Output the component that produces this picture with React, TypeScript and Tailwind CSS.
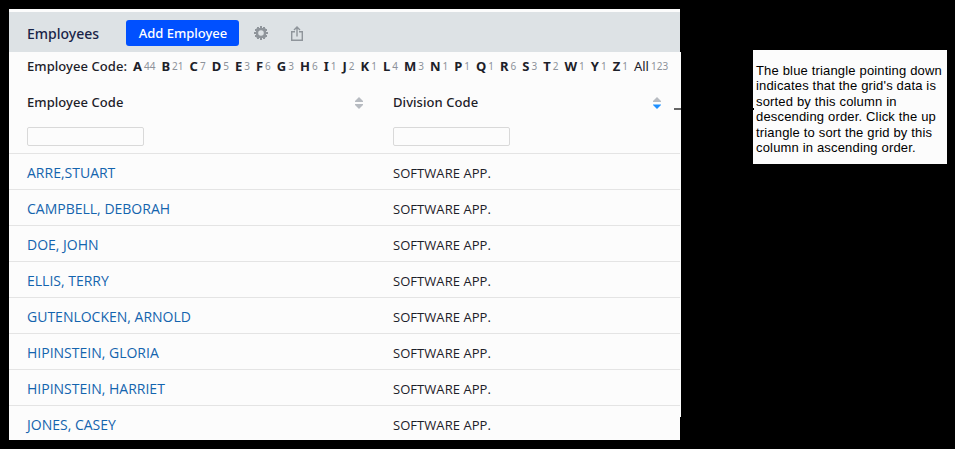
const letters: [string, number][] = [
  ["A", 44], ["B", 21], ["C", 7], ["D", 5], ["E", 3], ["F", 6], ["G", 3], ["H", 6],
  ["I", 1], ["J", 2], ["K", 1], ["L", 4], ["M", 3], ["N", 1], ["P", 1], ["Q", 1],
  ["R", 6], ["S", 3], ["T", 2], ["W", 1], ["Y", 1], ["Z", 1],
];

const names = [
  "ARRE,STUART",
  "CAMPBELL, DEBORAH",
  "DOE, JOHN",
  "ELLIS, TERRY",
  "GUTENLOCKEN, ARNOLD",
  "HIPINSTEIN, GLORIA",
  "HIPINSTEIN, HARRIET",
  "JONES, CASEY",
];

function Gear() {
  return (
    <svg className="ml-[15px] h-[14px] w-[14px] shrink-0" viewBox="0 0 14 14">
      <path
        fill="#8f959b"
        fillRule="evenodd"
        d="M3 1h2v1h1V0h2v2h1V1h2v1l1 1h1v2h-1v1h2v2h-2v1h1v2h-1l-1 1v1H9v-1H8v2H6v-2H5v1H3v-1l-1-1H1V9h1V8H0V6h2V5H1V3h1l1-1ZM7 4.200a2.800 2.800 0 1 0 0 5.600 2.800 2.800 0 0 0 0-5.600Z"
      />
    </svg>
  );
}

function Share() {
  return (
    <svg className="ml-[23px] h-[15px] w-3 shrink-0" viewBox="0 0 12 15" fill="none" stroke="#8f959b" strokeWidth="1.4">
      <path d="M4 5.700H.7v8.600h10.600V5.700H8M6 10.500V1M3 4l3-3 3 3" />
    </svg>
  );
}

function Sort({ active }: { active?: boolean }) {
  return (
    <svg className="h-3 w-2 shrink-0" viewBox="0 0 8 12">
      <path d="M4 0 8 4v1H0V4Z" fill="#b7bbc1" />
      <path d="M0 7h8v1l-4 4-4-4Z" fill={active ? "#1f8fff" : "#b7bbc1"} />
      {active && <path d="M0 7h8v1H0Z" fill="#8ac8ff" />}
    </svg>
  );
}

function HeaderCell({ title, active }: { title: string; active?: boolean }) {
  return (
    <div className={active ? "w-[268px]" : "w-[366px]"}>
      <div className={`flex h-[47px] items-center justify-between pb-px ${active ? "" : "pr-[30px]"}`}>
        <span className="text-[13px] font-medium tracking-[0.06px]">{title}</span>
        <Sort active={active} />
      </div>
      <input aria-label={title} className="block h-[19px] w-[117px] rounded-[2px] border border-[#d9d9d9] bg-[#fcfcfc]" />
    </div>
  );
}

export default function App() {
  return (
    <div className="flex h-[449px] w-[955px] items-start overflow-hidden bg-black pt-[9px] pl-[9px] font-['Noto_Sans','Open_Sans',sans-serif] text-[#1d2129]">
      <main className="relative h-[431px] w-[671px] shrink-0 bg-[#fcfcfc] pt-[3px]">
        <header className="flex h-10 items-center bg-[#dde2e5] pt-0.5 pl-[18px]">
          <h1 className="w-[99px] text-[14px] font-medium text-[#182448]">Employees</h1>
          <button className="h-[26px] w-[113px] shrink-0 rounded-[3px] bg-[#0050ff] pt-[2px] pl-px text-[13px] font-medium text-white">
            Add Employee
          </button>
          <Gear />
          <Share />
        </header>
        <nav className="flex h-[28px] items-center pt-0.5 pl-[18px] text-[13px] whitespace-nowrap">
          <span className="w-[106px] font-medium tracking-[0.06px]">Employee Code:</span>
          <div className="flex items-center gap-[6px]">
            {letters.map(([letter, count]) => (
              <span key={letter} className="flex items-center gap-[2px]">
                <b>{letter}</b>
                <span className="pb-[2px] text-[10px] text-[#8d929a]">{count}</span>
              </span>
            ))}
            <span className="flex items-center gap-[2px]">
              <span>All</span>
              <span className="pb-[2px] text-[10px] text-[#8d929a]">123</span>
            </span>
          </div>
        </nav>
        <div className="flex h-[74px] border-b border-[#e4e4e4] pl-[18px]">
          <HeaderCell title="Employee Code" />
          <HeaderCell title="Division Code" active />
        </div>
        <div className="h-[286px] overflow-hidden font-['Open_Sans','Noto_Sans',sans-serif]">
          {names.map((name) => (
            <div key={name} className="flex h-9 items-center border-b border-[#e4e4e4] pl-[18px]">
              <span className="w-[366px] pt-px text-[14px] text-[#1464ae]">{name}</span>
              <span className="pt-1 text-[13px] tracking-[0.05px]">SOFTWARE APP.</span>
            </div>
          ))}
        </div>
        <div className="absolute top-[43px] left-[671px] h-[365px] w-px bg-[#fcfcfc]" />
        <div className="absolute top-[99px] left-[665px] h-[2px] w-[7px] bg-[#666]" />
      </main>
      <aside className="relative mt-[41px] ml-[73px] h-[114px] w-[194px] shrink-0 bg-[#fcfcfc] pt-[13px] pl-[3px] font-['Liberation_Sans',sans-serif] text-[13px] leading-[15.4px] tracking-[0.17px] whitespace-nowrap text-black">
        <p>The blue triangle pointing down</p>
        <p>indicates that the grid's data is</p>
        <p>sorted by this column in</p>
        <p>descending order. Click the up</p>
        <p>triangle to sort the grid by this</p>
        <p>column in ascending order.</p>
        <div className="absolute top-[58px] left-0 h-[2px] w-px bg-black" />
      </aside>
    </div>
  );
}
